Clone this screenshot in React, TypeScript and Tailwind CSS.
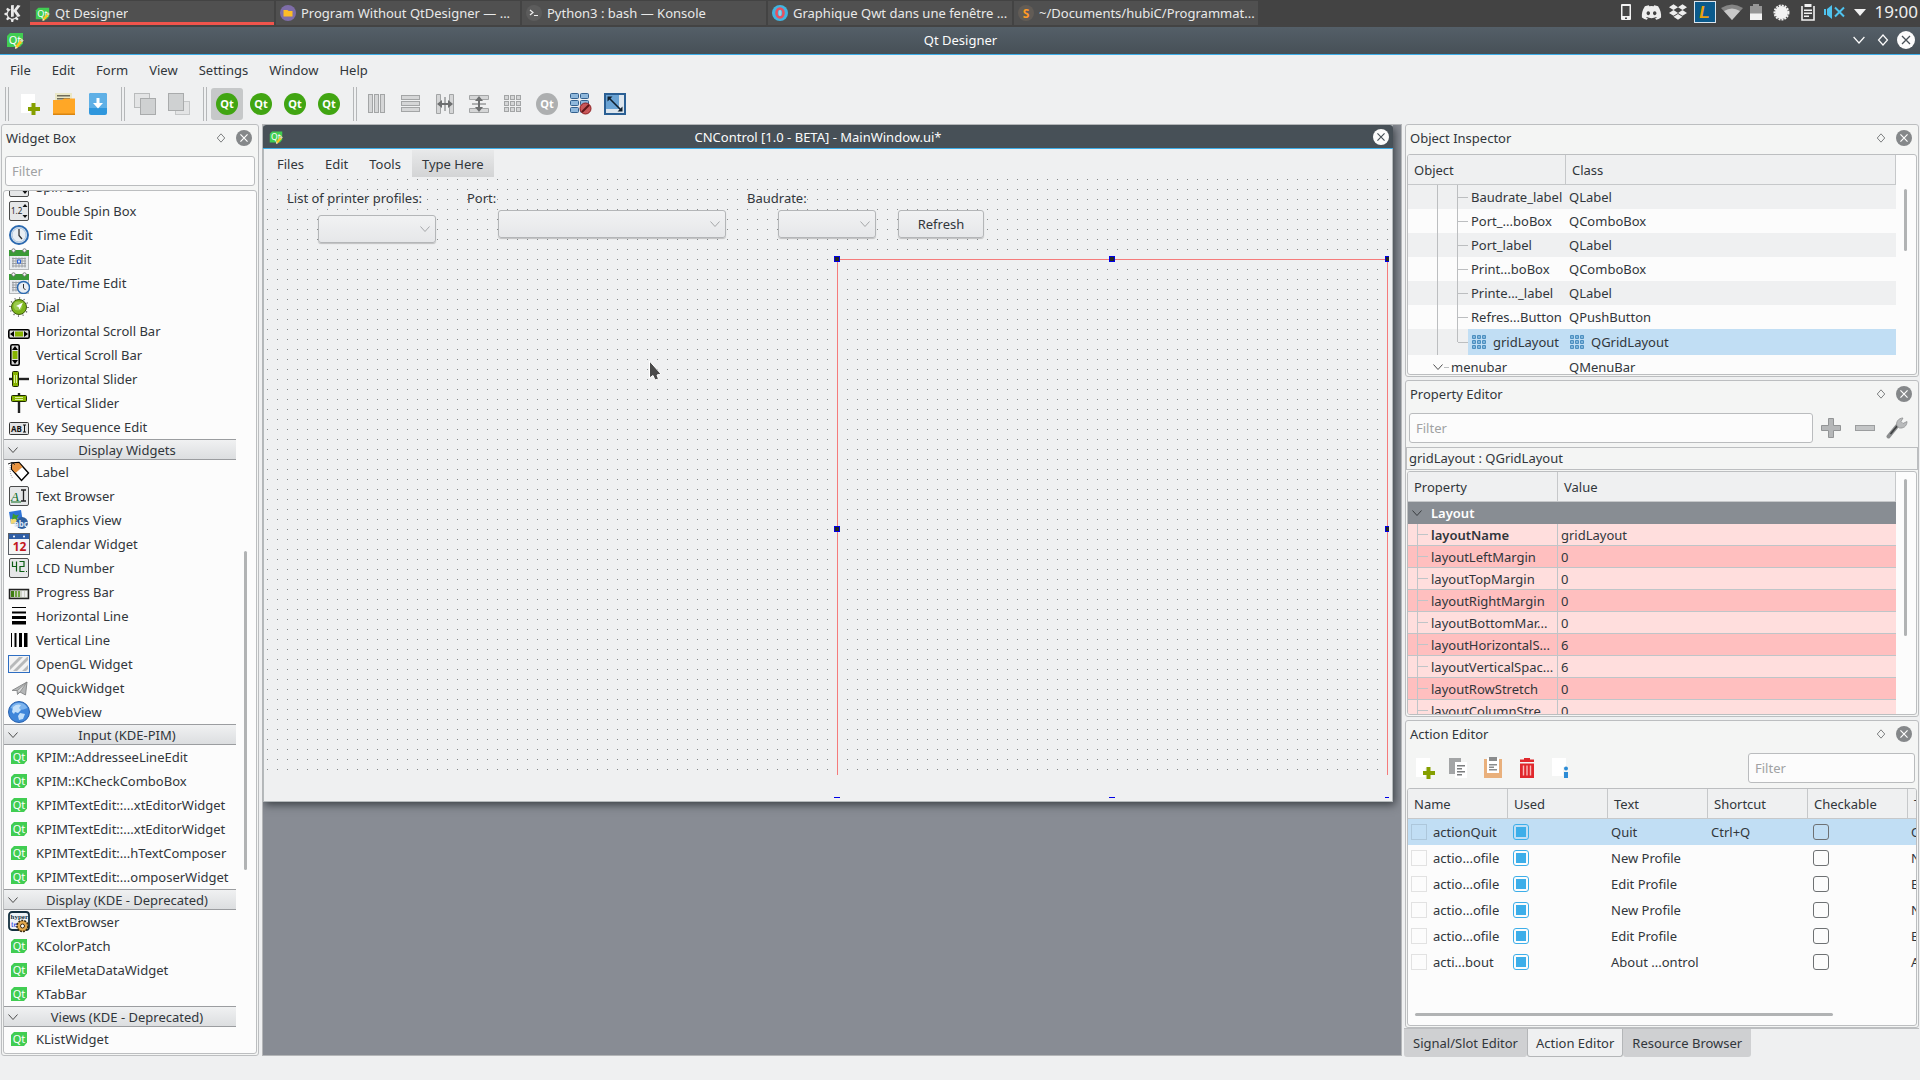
import type { ReactNode } from 'react'
import { SiKde } from 'react-icons/si'
import { FaDiscord, FaDropbox } from 'react-icons/fa'

/* ---------- small shared pieces ---------- */

const QtBadge = ({ size = 18, pencil = false }: { size?: number; pencil?: boolean }) => (
  <svg width={size} height={size} viewBox="0 0 18 18" className="shrink-0">
    <path d="M4 2h13v10.500l-3 3.500H1V5z" fill="#41cd52" />
    <text x="9" y="13" textAnchor="middle" fontSize="11" fontFamily="Noto Sans" fill="#fff">Qt</text>
    {pencil && (
      <>
        <path d="M15.500 7.500l2 2-6 7.500-2.500.8.5-2.800z" fill="#fcc520" />
        <path d="M15.500 7.500l2 2-1.500 1.800-2-1.800z" fill="#c9d8c4" />
        <path d="M9.500 15l2 2-2.500.8z" fill="#e8e8e8" />
      </>
    )}
  </svg>
)

const Chevron = ({ size = 10, color = '#4d4d4d' }: { size?: number; color?: string }) => (
  <svg width={size} height={size} viewBox="0 0 10 10" fill="none" stroke={color} className="shrink-0">
    <path d="M.5 2.500L5 7.500l4.500-5" />
  </svg>
)

const Diamond = ({ size, color }: { size: number; color: string }) => (
  <svg width={size} height={size} viewBox="0 0 12 12" fill="none" stroke={color} strokeWidth="1.200">
    <path d="M6 1l4.500 5L6 11 1.500 6z" />
  </svg>
)

const CloseCircle = ({ size, bg, fg }: { size: number; bg: string; fg: string }) => (
  <svg width={size} height={size} viewBox="0 0 18 18">
    <circle cx="9" cy="9" r="9" fill={bg} />
    <path d="M5 5l8 8M13 5l-8 8" stroke={fg} strokeWidth="1.300" />
  </svg>
)

const DockTitle = ({ title }: { title: string }) => (
  <div className="flex h-[29px] shrink-0 items-center pr-[6px] pb-[3px] pl-1">
    <h2 className="flex-1">{title}</h2>
    <button aria-label={`Float ${title}`} className="mr-[10px]"><Diamond size={10} color="#7f8182" /></button>
    <button aria-label={`Close ${title}`}><CloseCircle size={16} bg="#85888a" fg="#fff" /></button>
  </div>
)

const FilterBox = ({ label, className }: { label: string; className: string }) => (
  <input
    type="text"
    placeholder="Filter"
    aria-label={label}
    className={`h-[30px] rounded-[3px] border border-[#babcbe] bg-[#fcfcfc] px-[6px] placeholder:text-[#a0a2a3] focus:outline-none ${className}`}
  />
)

const Handle = () => (
  <div className="flex h-[34px] w-1 shrink-0 border-x border-[#b5b7b9]" />
)

/* ---------- task bar ---------- */

const TASKS = [
  { title: 'Qt Designer', icon: <QtBadge size={15} pencil />, active: true },
  {
    title: 'Program Without QtDesigner — ...',
    icon: (
      <svg width="16" height="16" viewBox="0 0 16 16">
        <circle cx="8" cy="8" r="8" fill="#7e6da8" />
        <path d="M3.500 5h4l1 1h4v5.500h-9z" fill="#fdbc27" />
      </svg>
    ),
  },
  {
    title: 'Python3 : bash — Konsole',
    icon: (
      <svg width="16" height="16" viewBox="0 0 16 16" fill="none" stroke="#eee" strokeWidth="1.200">
        <circle cx="8" cy="8" r="8" fill="#5c5c5c" stroke="none" />
        <path d="M4 5l3 2.500L4 10M8 10.500h4" />
      </svg>
    ),
  },
  {
    title: 'Graphique Qwt dans une fenêtre ...',
    icon: (
      <svg width="16" height="16" viewBox="0 0 16 16">
        <circle cx="8" cy="8" r="8" fill="#41b4e0" />
        <ellipse cx="8" cy="8" rx="3.500" ry="4.500" fill="none" stroke="#e8505f" strokeWidth="2.600" />
        <ellipse cx="8" cy="8" rx="1.500" ry="3" fill="#8fd0ea" />
      </svg>
    ),
  },
  {
    title: '~/Documents/hubiC/Programmat...',
    icon: (
      <svg width="16" height="16" viewBox="0 0 16 16">
        <circle cx="8" cy="8" r="8" fill="#625c56" />
        <text x="8" y="12.500" textAnchor="middle" fontSize="12" fontWeight="700" fontFamily="Noto Sans" fill="#ff9a26">S</text>
      </svg>
    ),
  },
]

const Tray = () => (
  <div className="flex items-center gap-[9px] pr-[2px] text-[#eee]">
    <svg width="12" height="18" viewBox="0 0 12 18">
      <rect x="1" y="1" width="10" height="16" rx="1" fill="#f2f2f2" />
      <rect x="2.500" y="3" width="7" height="10" fill="#454545" />
      <rect x="5" y="14.500" width="2" height="1.500" fill="#454545" />
    </svg>
    <FaDiscord size={21} className="-mr-[2px]" />
    <FaDropbox size={18} />
    <svg width="22" height="22" viewBox="0 0 22 22" className="-mx-[2px]">
      <rect x=".5" y=".5" width="21" height="21" fill="#0a5a8c" stroke="#d9e5ee" />
      <text x="10.500" y="17" textAnchor="middle" fontSize="17" fontStyle="italic" fontWeight="700" fontFamily="Liberation Sans" fill="#e8a20c">L</text>
    </svg>
    <svg width="22" height="17" viewBox="0 0 22 17" className="-mx-[2px]">
      <path d="M0 4Q11-3 22 4L11 16z" fill="#858585" />
      <path d="M3 7Q11 2 19 7L11 16z" fill="#c9c9c9" />
    </svg>
    <svg width="12" height="16" viewBox="0 0 12 16">
      <path d="M3 0h6v2h3v8H0V2h3z" fill="#959595" />
      <path d="M0 9.500h12V16H0z" fill="#f2f2f2" />
    </svg>
    <svg width="17" height="17" viewBox="0 0 17 17" className="mx-[2px]">
      <circle cx="8.500" cy="8.500" r="6.500" fill="#f2f2f2" />
      <circle cx="8.500" cy="8.500" r="7" fill="none" stroke="#f2f2f2" strokeWidth="2" strokeDasharray="2 1" />
    </svg>
    <svg width="14" height="17" viewBox="0 0 14 17">
      <path d="M1 2v14h12V2" fill="none" stroke="#f2f2f2" strokeWidth="1.600" />
      <path d="M3.500 0h7v3h-7zM3 5.500h8V7H3zM3 8.500h8V10H3zM3 11.500h5V13H3z" fill="#f2f2f2" />
    </svg>
    <svg width="21" height="14" viewBox="0 0 21 14">
      <path d="M0 4h2v6H0zM3 4l5-4v14L3 10z" fill="#4fc3ee" />
      <path d="M11 2.500l9 9M20 2.500l-9 9" stroke="#4fc3ee" strokeWidth="2" />
    </svg>
    <svg width="12" height="7" viewBox="0 0 12 7"><path d="M0 0h12L6 7z" fill="#f2f2f2" /></svg>
    <span className="text-[17px] leading-6">19:00</span>
  </div>
)

const TaskBar = () => (
  <div className="flex h-[27px] shrink-0 items-start bg-[#434343] text-[#e9e9e9]">
    <button aria-label="Application launcher" className="flex h-[26px] w-[30px] items-center pl-1">
      <SiKde size={17} />
    </button>
    <nav className="flex flex-1 gap-[2px] pt-px">
      {TASKS.map(task => (
        <button
          key={task.title}
          className={`flex h-6 w-[244px] items-center gap-[5px] border-b-[3px] bg-[#505050] pl-1 ${
            task.active ? 'border-[#f0544c] pl-[5px]' : 'border-[#505050]'
          }`}
        >
          <span className="pt-[3px]">{task.icon}</span>
          <span className="truncate pt-[2px]">{task.title}</span>
        </button>
      ))}
    </nav>
    <Tray />
  </div>
)

/* ---------- tool bar ---------- */

const NewFileIcon = () => (
  <svg width="22" height="22" viewBox="0 0 22 22">
    <path d="M2 1h14v10h-5v9H2z" fill="#fff" />
    <path d="M12.500 10h4v4h4.500v4h-4.500v4h-4v-4H9v-4h3.500z" fill="#859f00" />
  </svg>
)

const OpenIcon = () => (
  <svg width="22" height="22" viewBox="0 0 22 22">
    <path d="M2 0h17v12H2z" fill="#eae7c6" />
    <path d="M4 2h13v1.500H4zM4 5h13v1.500H4z" fill="#6f6c5c" />
    <path d="M0 7h9l2-1.500h11V21H0z" fill="#ffa726" />
    <path d="M0 20.500h22V22H0z" fill="#d98511" />
  </svg>
)

const SaveIcon = () => (
  <svg width="22" height="22" viewBox="0 0 22 22">
    <rect x="2" y="0" width="18" height="22" rx="2" fill="#2f97dd" />
    <path d="M4 0h14a2 2 0 012 2v13H2V2a2 2 0 012-2z" fill="#5fb0e6" />
    <path d="M9.500 5h3v5H16l-5 5.500L6 10h3.500z" fill="#fff" />
  </svg>
)

const StackIcon = ({ front }: { front: boolean }) => (
  <svg width="22" height="24" viewBox="0 0 22 24" stroke="#a9abac">
    {front ? (
      <>
        <rect x="7.500" y="9.500" width="14" height="13" fill="#e3e4e5" stroke="#c5c7c8" />
        <rect x=".5" y="1.500" width="15" height="17" fill="#cfd1d2" />
      </>
    ) : (
      <>
        <rect x=".5" y="1.500" width="15" height="14" fill="#e3e4e5" stroke="#b9bbbc" />
        <rect x="6.500" y="6.500" width="15" height="16" fill="#cfd1d2" />
      </>
    )}
  </svg>
)

const QtRound = ({ color = '#41a512' }: { color?: string }) => (
  <svg width="22" height="22" viewBox="0 0 22 22">
    <circle cx="11" cy="11" r="11" fill={color} />
    <text x="11" y="15" textAnchor="middle" fontSize="11" fontWeight="700" fontFamily="Noto Sans" fill="#fff">Qt</text>
  </svg>
)

const LayoutIcon = ({ kind }: { kind: string }) => (
  <svg width="20" height="20" viewBox="0 0 20 20" fill="#d5d6d7" stroke="#a3a5a6">
    {kind === 'h' && [1.500, 7.500, 13.500].map(x => <rect key={x} x={x} y=".5" width="4" height="18" />)}
    {kind === 'v' && [1.500, 7.500, 13.500].map(y => <rect key={y} x=".5" y={y} width="18" height="4" />)}
    {kind === 'hs' && (
      <>
        <path d="M1.500 .5h4v19h-4zM14.500 .5h4v19h-4z" />
        <path d="M2 10l5-4v3h6V6l5 4-5 4v-3H7v3z" fill="#6d6f70" stroke="none" />
        <path d="M10 3v14" stroke="#6d6f70" />
      </>
    )}
    {kind === 'vs' && (
      <>
        <path d="M.5 1.500v4h19v-4zM.5 14.500v4h19v-4z" />
        <path d="M10 2l4 5h-3v6h3l-4 5-4-5h3V7H6z" fill="#6d6f70" stroke="none" />
        <path d="M3 10h14" stroke="#6d6f70" />
      </>
    )}
    {kind === 'grid' && [1.500, 7.500, 13.500].map(x => [1.500, 7.500, 13.500].map(y => <rect key={`${x}-${y}`} x={x} y={y} width="4" height="4" />))}
  </svg>
)

const BreakLayoutIcon = () => (
  <svg width="22" height="22" viewBox="0 0 22 22">
    {[0, 7, 14].map(y => (
      <g key={y} fill="#8fb8dc" stroke="#33618f">
        <rect x=".5" y={y + 0.5} width="8" height="5" rx="1" />
        <rect x="10.500" y={y + 0.5} width="8" height="5" rx="1" />
      </g>
    ))}
    <circle cx="15.500" cy="15.500" r="5.500" fill="#c9585a" stroke="#8e1d20" />
    <path d="M12 19l7-7" stroke="#5e1517" strokeWidth="2" />
  </svg>
)

const AdjustSizeIcon = () => (
  <svg width="22" height="22" viewBox="0 0 22 22">
    <rect x="1" y="1" width="20" height="20" fill="#6aa3d4" stroke="#2a5f94" strokeWidth="2" />
    <path d="M15 2h5v18H2v-4h13z" fill="#dde6ee" />
    <path d="M5 5l12 12" stroke="#10202e" strokeWidth="1.600" />
    <path d="M3.500 3.500h5l-5 5zM18.500 18.500h-5l5-5z" fill="#10202e" />
  </svg>
)

const ToolButton = ({ label, active, children }: { label: string; active?: boolean; children: ReactNode }) => (
  <button aria-label={label} className={`flex size-8 items-center justify-center rounded-[3px] ${active ? 'bg-[#c6c8c9]' : ''}`}>
    {children}
  </button>
)

const ToolBar = () => (
  <div className="flex h-[38px] shrink-0 items-center pl-[5px]">
    <Handle />
    <div className="flex gap-[2px] pr-[7px] pl-[5px]">
      <ToolButton label="New"><NewFileIcon /></ToolButton>
      <ToolButton label="Open"><OpenIcon /></ToolButton>
      <ToolButton label="Save"><SaveIcon /></ToolButton>
    </div>
    <Handle />
    <div className="flex gap-[2px] px-1 pr-[8px]">
      <ToolButton label="Send to back"><StackIcon front={false} /></ToolButton>
      <ToolButton label="Bring to front"><StackIcon front /></ToolButton>
    </div>
    <Handle />
    <div className="flex gap-[2px] pr-[8px] pl-1">
      <ToolButton label="Edit widgets" active><QtRound /></ToolButton>
      <ToolButton label="Edit signals/slots"><QtRound /></ToolButton>
      <ToolButton label="Edit buddies"><QtRound /></ToolButton>
      <ToolButton label="Edit tab order"><QtRound /></ToolButton>
    </div>
    <Handle />
    <div className="flex gap-[2px] pl-1">
      <ToolButton label="Lay out horizontally"><LayoutIcon kind="h" /></ToolButton>
      <ToolButton label="Lay out vertically"><LayoutIcon kind="v" /></ToolButton>
      <ToolButton label="Horizontal splitter"><LayoutIcon kind="hs" /></ToolButton>
      <ToolButton label="Vertical splitter"><LayoutIcon kind="vs" /></ToolButton>
      <ToolButton label="Lay out in a grid"><LayoutIcon kind="grid" /></ToolButton>
      <ToolButton label="Lay out in a form"><QtRound color="#adafb0" /></ToolButton>
      <ToolButton label="Break layout"><BreakLayoutIcon /></ToolButton>
      <ToolButton label="Adjust size"><AdjustSizeIcon /></ToolButton>
    </div>
  </div>
)

/* ---------- widget box ---------- */

const calendar = (
  <>
    <rect x="1.500" y="3.500" width="19" height="18" fill="#e9ecef" stroke="#b5b8ba" />
    <path d="M1 2h20v6H1z" fill="#3a9a35" />
    <path d="M4 10.500h14M4 13h14M4 15.500h14M4 18h14M5 9.500v10M8 9.500v10M11 9.500v10M14 9.500v10M17 9.500v10" stroke="#9a9ea3" />
    <circle cx="5.500" cy="2.500" r="1.700" fill="#fff" stroke="#777" />
    <circle cx="16.500" cy="2.500" r="1.700" fill="#fff" stroke="#777" />
  </>
)

const roundedTile = <rect x="1.500" y="1.500" width="19" height="19" rx="1.500" fill="#e6e7e8" stroke="#4b4b4b" />

const ICONS: Record<string, ReactNode> = {
  spin: (
    <>
      {roundedTile}
      <text x="3" y="14" fontSize="8" fontFamily="Noto Sans" fill="#222">1.2</text>
      <path d="M14.500 7h5L17 4zM14.500 15h5L17 18z" fill="#111" />
    </>
  ),
  time: (
    <>
      <circle cx="11" cy="11" r="9" fill="#e9eef3" stroke="#2c6ab0" strokeWidth="2" />
      <circle cx="11" cy="11" r="7" fill="none" stroke="#a9c3df" />
      <path d="M11 5v6.500l3 3.500" fill="none" stroke="#333" strokeWidth="1.300" />
    </>
  ),
  date: (
    <>
      {calendar}
      <rect x="9.500" y="12" width="3" height="3" fill="#dbe8ff" stroke="#2b66e0" />
    </>
  ),
  datetime: (
    <>
      {calendar}
      <circle cx="15.500" cy="15.500" r="6" fill="#e9eef3" stroke="#2c6ab0" strokeWidth="1.500" />
      <path d="M15.500 12v4l2 2" fill="none" stroke="#333" />
    </>
  ),
  dial: (
    <>
      <circle cx="11" cy="11" r="9" fill="none" stroke="#555" strokeWidth="1.500" strokeDasharray="1 3.700" />
      <circle cx="11" cy="11" r="7.500" fill="#7db51c" stroke="#3c5c0c" />
      <circle cx="10" cy="10" r="4.500" fill="#9ccb4f" />
      <path d="M15 6.500l-3.500 7-1-2.500L8 10z" fill="#fff" />
    </>
  ),
  hscroll: (
    <>
      <rect x=".8" y="9.800" width="20.400" height="8.400" rx="1.500" fill="#dcdcdc" stroke="#000" strokeWidth="1.600" />
      <path d="M6 11v6l-4-3zM16 11v6l4-3z" fill="#000" />
      <rect x="7" y="11.500" width="8" height="5" fill="#86b300" />
    </>
  ),
  vscroll: (
    <>
      <rect x="2.800" y=".8" width="8.400" height="20.400" rx="1.500" fill="#dcdcdc" stroke="#000" strokeWidth="1.600" />
      <path d="M4 6h6L7 2zM4 16h6l-3 4z" fill="#000" />
      <rect x="4.500" y="7" width="5" height="8" fill="#86b300" />
    </>
  ),
  hslider: (
    <>
      <path d="M1 11h20" stroke="#222" strokeWidth="2.400" />
      <rect x="4.500" y="3.500" width="6" height="15" rx="1" fill="#86b300" stroke="#1d2a00" />
      <path d="M6.500 7v8M8.500 7v8" stroke="#dcefa0" />
    </>
  ),
  vslider: (
    <>
      <path d="M11 1v20" stroke="#222" strokeWidth="2.400" />
      <rect x="3.500" y="3.500" width="15" height="6" rx="1" fill="#86b300" stroke="#1d2a00" />
      <path d="M7 5.500h8M7 7.500h8" stroke="#dcefa0" />
    </>
  ),
  key: (
    <>
      <rect x="1.500" y="6.500" width="19" height="12" rx="1" fill="#e2e3e4" stroke="#333" />
      <text x="3" y="15.500" fontSize="8" fontWeight="700" fontFamily="Noto Sans" fill="#111">AB</text>
      <path d="M15 9h3M15 16h3M16.500 9v7" stroke="#111" />
    </>
  ),
  label: (
    <>
      <path d="M4 2l7-.5L20.500 12l-7 7.500L3.500 8z" fill="#fff" stroke="#000" strokeWidth="1.400" />
      <path d="M4.500 2.500l6.500-.5 3.500 4-7 6L4 8z" fill="#e8933f" />
      <path d="M0 3l4-1.500 3 2" fill="none" stroke="#222" />
      <path d="M2.500 4c-1 5 0 10 2 13" fill="none" stroke="#999" strokeDasharray="1 1" />
    </>
  ),
  text: (
    <>
      {roundedTile}
      <text x="3" y="15.500" fontSize="13" fontStyle="italic" fontFamily="Liberation Serif" fill="#0a6a1c">A</text>
      <path d="M3 17h10" stroke="#0a6a1c" />
      <path d="M13 5h5M13 16h5M15.500 5v11" stroke="#222" strokeWidth="1.300" />
    </>
  ),
  graphics: (
    <>
      <path d="M1 3l12-2 2 12-12 2z" fill="#2e74d8" />
      <path d="M2.500 10l12-1 .5 4-12 2z" fill="#f2d873" />
      <path d="M5 4.500l3 2 3-1-2 3 1 4-3-3-3 1z" fill="#3c9c2e" />
      <circle cx="14" cy="14" r="6" fill="#2f5f9f" />
      <text x="6" y="17.500" fontSize="8" fontWeight="700" fontFamily="Noto Sans" fill="#dce8f7">abc</text>
    </>
  ),
  cal: (
    <>
      <rect x=".5" y=".5" width="21" height="21" fill="#f4f4f4" stroke="#5a5f66" />
      <path d="M1 1h20v5H1z" fill="#2f5ea5" />
      <circle cx="6" cy="3.500" r="1" fill="#fff" />
      <circle cx="16" cy="3.500" r="1" fill="#fff" />
      <text x="11.500" y="18" textAnchor="middle" fontSize="12" fontWeight="700" fontFamily="Noto Sans" fill="#c3161c">12</text>
    </>
  ),
  lcd: (
    <>
      {roundedTile}
      <path d="M4.500 4.500v5h4v-5M8.500 9.500v5M11.500 4.500h4.500v5h-4v5h4.500M18 14.500h1" fill="none" stroke="#0b5c12" strokeWidth="1.200" />
    </>
  ),
  progress: (
    <>
      <rect x="1.500" y="8.500" width="19" height="9" fill="#cfd3c8" stroke="#222" strokeWidth="1.500" />
      <path d="M3 10h3v6H3z" fill="#3f7d12" />
      <path d="M7 10h2v6H7zM10 10h2v6h-2z" fill="#6ea33f" />
      <path d="M14 10h2v6h-2zM17 10h2v6h-2z" fill="#efefef" />
    </>
  ),
  hline: <path d="M4 2h14v1H4zM4 6.500h14v2H4zM4 11h14v3H4zM4 16h14v3.500H4z" fill="#000" />,
  vline: <path d="M3 4h1v14H3zM6.500 4h2v14h-2zM11 4h3v14h-3zM16 4h3.500v14H16z" fill="#000" />,
  opengl: (
    <>
      <rect x=".5" y="2.500" width="21" height="17" fill="#f3f3f3" stroke="#2e6ec2" />
      <path d="M2 13l9-9h4L2 17zM5 18L19 4h1v3L9 18zM14 18l6-6v4l-2 2z" fill="#b7b9ba" />
    </>
  ),
  quick: (
    <>
      <path d="M4 13.500L19 5l-1.500 13-5.500-3-2.500 2.500-.5-4z" fill="#b4b6b7" stroke="#8b8d8e" />
      <path d="M9 14L19 5l-7 10" fill="#dcdddd" stroke="#777" strokeWidth=".6" />
    </>
  ),
  web: (
    <>
      <circle cx="11" cy="11" r="10.500" fill="#3f86da" stroke="#2b62ad" />
      <path d="M2.500 7a9.500 9.500 0 0117 0Q11 11 2.500 7z" fill="#7db4ee" />
      <path d="M5 6c3-3 6-3 8-2l-2 3 2 2-3 3-3-1-1 2-2-2zM12 12l5 1-2 5-4 1-1-4z" fill="#c3e0fa" />
    </>
  ),
  hyper: (
    <>
      <rect x="1" y="1" width="20" height="18" rx="3" fill="#eef3f6" stroke="#14303f" strokeWidth="1.800" />
      <text x="2.500" y="8" fontSize="7" fontWeight="700" fontFamily="Liberation Serif" fill="#16323f">hyper</text>
      <text x="3" y="16" fontSize="9" fontFamily="Liberation Serif" fill="#1733d8">te</text>
      <circle cx="14.500" cy="15" r="5.500" fill="#e3a94c" stroke="#3a2a10" strokeWidth="1.600" strokeDasharray="2 1" />
      <circle cx="14.500" cy="15" r="2" fill="#fff" stroke="#3a2a10" />
    </>
  ),
  dark: <path d="M3 2h16v16H3z" fill="#3a150d" />,
}

interface Category {
  title?: string
  items: [string, string][]
}

const WIDGETS: Category[] = [
  {
    items: [
      ['spin', 'Spin Box'],
      ['spin', 'Double Spin Box'],
      ['time', 'Time Edit'],
      ['date', 'Date Edit'],
      ['datetime', 'Date/Time Edit'],
      ['dial', 'Dial'],
      ['hscroll', 'Horizontal Scroll Bar'],
      ['vscroll', 'Vertical Scroll Bar'],
      ['hslider', 'Horizontal Slider'],
      ['vslider', 'Vertical Slider'],
      ['key', 'Key Sequence Edit'],
    ],
  },
  {
    title: 'Display Widgets',
    items: [
      ['label', 'Label'],
      ['text', 'Text Browser'],
      ['graphics', 'Graphics View'],
      ['cal', 'Calendar Widget'],
      ['lcd', 'LCD Number'],
      ['progress', 'Progress Bar'],
      ['hline', 'Horizontal Line'],
      ['vline', 'Vertical Line'],
      ['opengl', 'OpenGL Widget'],
      ['quick', 'QQuickWidget'],
      ['web', 'QWebView'],
    ],
  },
  {
    title: 'Input (KDE-PIM)',
    items: [
      ['qt', 'KPIM::AddresseeLineEdit'],
      ['qt', 'KPIM::KCheckComboBox'],
      ['qt', 'KPIMTextEdit::...xtEditorWidget'],
      ['qt', 'KPIMTextEdit::...xtEditorWidget'],
      ['qt', 'KPIMTextEdit:...hTextComposer'],
      ['qt', 'KPIMTextEdit:...omposerWidget'],
    ],
  },
  {
    title: 'Display (KDE - Deprecated)',
    items: [
      ['hyper', 'KTextBrowser'],
      ['qt', 'KColorPatch'],
      ['qt', 'KFileMetaDataWidget'],
      ['qt', 'KTabBar'],
    ],
  },
  {
    title: 'Views (KDE - Deprecated)',
    items: [
      ['qt', 'KListWidget'],
      ['dark', ''],
    ],
  },
]

const WidgetBox = () => (
  <aside className="mr-[3px] flex w-[258px] shrink-0 flex-col rounded-[3px] border border-[#bcbec0] bg-[#f4f5f4]">
    <DockTitle title="Widget Box" />
    <FilterBox label="Filter widgets" className="mx-[3px] mt-[2px]" />
    <div className="mx-px mt-1 mb-px flex min-h-0 flex-1 overflow-hidden rounded-[3px] border border-[#bcbec0] bg-[#fcfcfc]">
      <div className="h-0 w-[232px] shrink-0">
        <div className="-mt-4">
          {WIDGETS.map((cat, i) => (
            <section key={i}>
              {cat.title && (
                <button className="flex h-[21px] w-full items-center border-y border-[#9b9da0] bg-linear-to-b from-[#f0f1f2] to-[#dcdee0] pl-1">
                  <Chevron />
                  <span className="flex-1 text-center">{cat.title}</span>
                </button>
              )}
              <ul>
                {cat.items.map(([icon, name], j) => (
                  <li key={j} className="flex h-6 items-center gap-[6px] pl-1">
                    {icon === 'qt' ? (
                      <span className="flex w-[22px] justify-center"><QtBadge size={18} /></span>
                    ) : (
                      <svg width="22" height="22" viewBox="0 0 22 22" className="shrink-0">{ICONS[icon]}</svg>
                    )}
                    <span className="whitespace-nowrap">{name}</span>
                  </li>
                ))}
              </ul>
            </section>
          ))}
        </div>
      </div>
      <div className="flex flex-1 justify-center pt-[360px] pr-[2px]">
        <div className="h-[319px] w-[3px] rounded bg-[#b1b3b4]" />
      </div>
    </div>
  </aside>
)

/* ---------- form being edited ---------- */

const FormCombo = ({ id, box }: { id: string; box: string }) => (
  <div className={`absolute h-7 ${box}`}>
    <select
      id={id}
      className="size-full appearance-none rounded-[3px] border border-[#b4b6b8] bg-linear-to-b from-[#f1f2f3] to-[#e6e7e9] shadow-[0_1px_1px_rgba(0,0,0,0.2)]"
    />
    <span className="pointer-events-none absolute inset-y-0 right-[6px] flex items-center">
      <Chevron color="#a5a7a9" />
    </span>
  </div>
)

const Grip = ({ at }: { at: string }) => (
  <span className={`absolute size-[6px] border border-[#0000e6] bg-[#232627] ${at}`} />
)

const FormWindow = () => (
  <section className="absolute top-0 right-2 left-0 flex h-[677px] flex-col border-x border-b border-[#b4b9bb] bg-[#eff0f1] shadow-[2px_3px_8px_rgba(30,35,40,0.7)]">
    <header className="-mx-px flex h-6 shrink-0 items-center rounded-t-[3px] border-b border-[#3daee9] bg-[#475057] pr-1 pl-[6px] text-[#fcfcfc]">
      <QtBadge size={14} pencil />
      <h1 className="flex-1 pr-5 text-center">CNControl [1.0 - BETA] - MainWindow.ui*</h1>
      <button aria-label="Close form"><CloseCircle size={16} bg="#fcfcfc" fg="#475057" /></button>
    </header>
    <nav className="flex h-[29px] shrink-0 items-center gap-px pl-[3px]">
      <button className="h-[27px] px-[10px]">Files</button>
      <button className="h-[27px] px-[10px]">Edit</button>
      <button className="h-[27px] px-[10px]">Tools</button>
      <button className="h-[27px] bg-linear-to-b from-[#e8e9ea] to-[#d3d4d5] px-[10px]">Type Here</button>
    </nav>
    <div className="relative flex-1">
      <svg className="absolute inset-x-0 top-0 h-[597px] w-full">
        <defs>
          <pattern id="dots" width="10" height="10" patternUnits="userSpaceOnUse">
            <rect x="3" y="1" width="1" height="1" fill="#85888a" />
          </pattern>
        </defs>
        <rect width="100%" height="100%" fill="url(#dots)" />
      </svg>
      <label htmlFor="profiles" className="absolute top-[10px] left-[23px]">List of printer profiles:</label>
      <label htmlFor="port" className="absolute top-[10px] left-[203px]">Port:</label>
      <label htmlFor="baudrate" className="absolute top-[10px] left-[483px]">Baudrate:</label>
      <FormCombo id="profiles" box="top-[37px] left-[54px] w-[118px]" />
      <FormCombo id="port" box="top-8 left-[234px] w-[228px]" />
      <FormCombo id="baudrate" box="top-8 left-[514px] w-[98px]" />
      <button className="absolute top-8 left-[634px] h-7 w-[86px] rounded-[3px] border border-[#b4b6b8] bg-linear-to-b from-[#f1f2f3] to-[#e6e7e9] shadow-[0_1px_1px_rgba(0,0,0,0.2)]">
        Refresh
      </button>

      {/* selected grid layout */}
      <div className="absolute top-[81px] right-1 left-[573px] h-[516px] border-x border-t border-[#f57b7b]" />
      <div className="absolute top-[78px] right-[3px] left-[570px] h-[542px] overflow-hidden">
        <Grip at="top-0 left-0" />
        <Grip at="top-0 left-[275px]" />
        <Grip at="top-0 -right-[2px]" />
        <Grip at="top-[270px] left-0" />
        <Grip at="top-[270px] -right-[2px]" />
        <span className="absolute bottom-0 left-0 h-px w-[6px] bg-[#0000e6]" />
        <span className="absolute bottom-0 left-[275px] h-px w-[6px] bg-[#0000e6]" />
        <span className="absolute right-0 bottom-0 h-px w-1 bg-[#0000e6]" />
      </div>

      <svg width="14" height="24" viewBox="0 0 14 24" className="absolute top-[181px] left-[384px]">
        <path d="M1.500 2v17l3.500-2.500 2 4.500 3.500-1-1.500-4 4-1z" fill="#4a4a4a" stroke="#fff" strokeWidth="1" />
      </svg>
    </div>
  </section>
)

/* ---------- object inspector ---------- */

const OBJECTS = [
  ['Baudrate_label', 'QLabel'],
  ['Port_...boBox', 'QComboBox'],
  ['Port_label', 'QLabel'],
  ['Print...boBox', 'QComboBox'],
  ['Printe..._label', 'QLabel'],
  ['Refres...Button', 'QPushButton'],
]

const GridGlyph = () => (
  <svg width="15" height="15" viewBox="0 0 15 15" className="shrink-0">
    {[0, 5, 10].map(x => [0, 5, 10].map(y => (
      <g key={`${x}-${y}`}>
        <rect x={x} y={y} width="4" height="4" rx="1" fill="#4c8fc0" />
        <rect x={x + 1} y={y + 1} width="2" height="2" fill="#7fb4da" />
      </g>
    )))}
  </svg>
)

const HEAD = 'h-[30px] border-r border-b border-[#c6c8ca] bg-[#eff0f1] px-[6px] text-left font-normal'

const ObjectInspector = () => (
  <section className="flex h-[253px] shrink-0 flex-col rounded-[3px] border border-[#bcbec0] bg-[#f4f5f4]">
    <DockTitle title="Object Inspector" />
    <div className="mx-px mb-px flex min-h-0 flex-1 overflow-hidden rounded-[3px] border border-[#bcbec0] bg-[#fcfcfc]">
      <div className="h-0 flex-1">
        <table className="w-full table-fixed border-separate border-spacing-0">
          <thead>
            <tr>
              <th className={`${HEAD} w-[158px]`}>Object</th>
              <th className={HEAD}>Class</th>
            </tr>
          </thead>
          <tbody>
            {OBJECTS.map(([name, cls]) => (
              <tr key={name} className="odd:bg-[#eff0f1]">
                <td className="p-0">
                  <div className="flex h-6 items-center">
                    <span className="h-full w-[30px] shrink-0 border-r border-[#bcbec0]" />
                    <span className="h-full w-5 shrink-0 border-r border-[#bcbec0]" />
                    <span className="h-px w-[10px] shrink-0 bg-[#bcbec0]" />
                    <span className="pl-[3px] whitespace-nowrap">{name}</span>
                  </div>
                </td>
                <td className="p-0 pl-[3px]">{cls}</td>
              </tr>
            ))}
            <tr className="bg-[#eff0f1]">
              <td className="p-0">
                <div className="flex h-[26px] items-center">
                  <span className="h-full w-[30px] shrink-0 border-r border-[#bcbec0]" />
                  <span className="h-[13px] w-5 shrink-0 self-start border-r border-[#bcbec0]" />
                  <span className="h-px w-[10px] shrink-0 bg-[#bcbec0]" />
                  <span className="flex h-full flex-1 items-center gap-[6px] bg-[#c1def4] pl-1">
                    <GridGlyph />
                    gridLayout
                  </span>
                </div>
              </td>
              <td className="bg-[#c1def4] p-0 pl-1">
                <span className="flex items-center gap-[6px]">
                  <GridGlyph />
                  QGridLayout
                </span>
              </td>
            </tr>
            <tr>
              <td className="p-0">
                <div className="flex h-6 items-center gap-px pl-[25px]">
                  <Chevron />
                  <span className="h-px w-[5px] bg-[#bcbec0]" />
                  <span className="pl-px">menubar</span>
                </div>
              </td>
              <td className="p-0 pl-[3px]">QMenuBar</td>
            </tr>
          </tbody>
        </table>
      </div>
      <div className="flex w-5 justify-center pt-[34px] pr-[2px]">
        <div className="h-[62px] w-[3px] rounded bg-[#b1b3b4]" />
      </div>
    </div>
  </section>
)

/* ---------- property editor ---------- */

const PROPERTIES = [
  ['layoutName', 'gridLayout'],
  ['layoutLeftMargin', '0'],
  ['layoutTopMargin', '0'],
  ['layoutRightMargin', '0'],
  ['layoutBottomMar...', '0'],
  ['layoutHorizontalS...', '6'],
  ['layoutVerticalSpac...', '6'],
  ['layoutRowStretch', '0'],
  ['layoutColumnStre...', '0'],
]

const PropertyEditor = () => (
  <section className="mt-[3px] flex h-[337px] shrink-0 flex-col rounded-[3px] border border-[#bcbec0] bg-[#f4f5f4]">
    <DockTitle title="Property Editor" />
    <div className="mt-[3px] flex items-center pl-[3px]">
      <FilterBox label="Filter properties" className="min-w-0 flex-1" />
      <button aria-label="Add property" className="flex w-[34px] justify-center pl-[2px]">
        <svg width="20" height="20" viewBox="0 0 20 20">
          <path d="M7.500.5h5v7h7v5h-7v7h-5v-7h-7v-5h7z" fill="#b5b7b8" stroke="#939596" />
        </svg>
      </button>
      <button aria-label="Remove property" className="flex w-[34px] justify-center pl-[2px]">
        <svg width="20" height="6" viewBox="0 0 20 6">
          <rect x=".5" y=".5" width="19" height="5" fill="#c3c5c6" stroke="#9c9e9f" />
        </svg>
      </button>
      <button aria-label="Configure" className="mr-[5px] flex w-[32px] justify-center">
        <svg width="22" height="22" viewBox="0 0 22 22">
          <path d="M2.500 19.500l9-11" stroke="#8b8d8e" strokeWidth="4" strokeLinecap="round" />
          <path d="M4.500 17l7-8.500" stroke="#3d3f40" strokeWidth="1.600" />
          <path d="M11 9c-1.500-4 1.500-8 6-8l-2 3.500 2 2 4-2c0 5-4 7-7.500 6.500z" fill="#b9bbbc" stroke="#8f9192" strokeWidth=".8" />
        </svg>
      </button>
    </div>
    <p className="mt-1 h-[23px] shrink-0 border border-[#bcbec0] pl-[2px]">gridLayout : QGridLayout</p>
    <div className="mx-px mt-px mb-px flex min-h-0 flex-1 overflow-hidden rounded-[3px] border border-[#bcbec0] bg-[#fcfcfc]">
      <div className="h-0 flex-1">
        <table className="w-full table-fixed border-separate border-spacing-0">
          <thead>
            <tr>
              <th className={`${HEAD} w-[150px]`}>Property</th>
              <th className={HEAD}>Value</th>
            </tr>
          </thead>
          <tbody>
            <tr>
              <td colSpan={2} className="h-[22px] bg-[#888d93] p-0 font-semibold text-white">
                <div className="flex h-[21px] items-center gap-[9px] pl-1">
                  <Chevron color="#3a3d40" />
                  Layout
                </div>
              </td>
            </tr>
            {PROPERTIES.map(([name, value]) => (
              <tr key={name} className="odd:bg-[#ffbfbf] even:bg-[#ffdedd]">
                <td className="border-r border-b border-[#bfc5c8] p-0">
                  <div className="flex h-[21px] items-center">
                    <span className="h-full w-[10px] shrink-0 border-r border-[#bfc5c8]" />
                    <span className="h-px w-[10px] shrink-0 bg-[#bfc5c8]" />
                    <span className={`pl-[3px] whitespace-nowrap ${name === 'layoutName' ? 'font-semibold' : ''}`}>{name}</span>
                  </div>
                </td>
                <td className="border-b border-[#bfc5c8] p-0 pl-[3px]">{value}</td>
              </tr>
            ))}
          </tbody>
        </table>
      </div>
      <div className="flex w-5 justify-center pt-[7px] pr-[2px]">
        <div className="h-[157px] w-[3px] rounded bg-[#b1b3b4]" />
      </div>
    </div>
  </section>
)

/* ---------- action editor ---------- */

const ACTIONS = [
  { name: 'actionQuit', text: 'Quit', shortcut: 'Ctrl+Q' },
  { name: 'actio...ofile', text: 'New Profile', shortcut: '' },
  { name: 'actio...ofile', text: 'Edit Profile', shortcut: '' },
  { name: 'actio...ofile', text: 'New Profile', shortcut: '' },
  { name: 'actio...ofile', text: 'Edit Profile', shortcut: '' },
  { name: 'acti...bout', text: 'About ...ontrol', shortcut: '' },
]

const CHECKBOX = 'block size-4 appearance-none rounded-[3px] border'

const ActionEditor = () => (
  <section className="mt-[3px] flex min-h-0 flex-1 flex-col rounded-[3px] border border-[#bcbec0] bg-[#f4f5f4]">
    <DockTitle title="Action Editor" />
    <div className="mt-[3px] flex items-center gap-3 pr-[3px] pl-2">
      <button aria-label="New action"><NewFileIcon /></button>
      <button aria-label="Copy">
        <svg width="22" height="22" viewBox="0 0 22 22">
          <path d="M1 1h12v16H1z" fill="#a3a5a6" />
          <path d="M7 5h12v16H7z" fill="#fff" />
          <path d="M9 8h8v1.500H9zM9 11h5v1.500H9zM9 14h8v1.500H9zM9 17h5v1.500H9z" fill="#7b7d7e" />
        </svg>
      </button>
      <button aria-label="Paste">
        <svg width="22" height="22" viewBox="0 0 22 22">
          <path d="M2 2h18v19H2z" fill="#e9b07c" />
          <path d="M5 1h12v15H5z" fill="#fff" />
          <path d="M7 0h8v4H7zM7 7h8v1.500H7zM7 9.500h5V11H7zM7 12h8v1.500H7z" fill="#8a8c8d" />
        </svg>
      </button>
      <button aria-label="Delete">
        <svg width="22" height="22" viewBox="0 0 22 22">
          <path d="M8 1h6v1.500h4V5H4V2.500h4zM4 6.500h14V21H4z" fill="#e0282c" />
          <path d="M7.500 8.500v10M11 8.500v10M14.500 8.500v10" stroke="#f9b9b9" strokeWidth="1.400" />
        </svg>
      </button>
      <button aria-label="Action info">
        <svg width="22" height="22" viewBox="0 0 22 22">
          <path d="M2 1h14v9h-3v9H2z" fill="#fff" />
          <circle cx="16" cy="11.500" r="2" fill="#2d8cd6" />
          <path d="M14 15h4v6h-4z" fill="#2d8cd6" />
        </svg>
      </button>
      <FilterBox label="Filter actions" className="ml-auto w-[167px]" />
    </div>
    <div className="mx-px mt-[5px] mb-px flex min-h-0 flex-1 flex-col overflow-hidden rounded-[3px] border border-[#bcbec0] bg-[#fcfcfc]">
      <div className="min-h-0 flex-1 overflow-hidden">
        <table className="w-[600px] table-fixed border-separate border-spacing-0">
          <thead>
            <tr>
              {['Name', 'Used', 'Text', 'Shortcut', 'Checkable', 'ToolTip'].map(h => (
                <th key={h} className={HEAD}>{h}</th>
              ))}
            </tr>
          </thead>
          <tbody>
            {ACTIONS.map((action, i) => (
              <tr key={i} className={i === 0 ? 'bg-[#c1def4]' : ''}>
                <td className="h-[26px] p-0">
                  <div className="flex items-center gap-[6px] pl-[3px]">
                    <span className="size-4 shrink-0 border border-black/10" />
                    {action.name}
                  </div>
                </td>
                <td className="p-0 pl-[5px]">
                  <input
                    type="checkbox"
                    defaultChecked
                    aria-label={`${action.text} used`}
                    className={`${CHECKBOX} border-[#3daee9] bg-clip-content p-[2px] checked:bg-[#3daee9]`}
                  />
                </td>
                <td className="p-0 pl-[3px]">{action.text}</td>
                <td className="p-0 pl-[3px]">{action.shortcut}</td>
                <td className="p-0 pl-[5px]">
                  <input type="checkbox" aria-label={`${action.text} checkable`} className={`${CHECKBOX} border-[#6e7173]`} />
                </td>
                <td className="p-0 pl-[3px]">{action.text}</td>
              </tr>
            ))}
          </tbody>
        </table>
      </div>
      <div className="mb-[9px] ml-[7px] h-[3px] w-[418px] rounded bg-[#b1b3b4]" />
    </div>
  </section>
)

const DockTabs = () => (
  <div className="-ml-px flex h-7 shrink-0 items-start border-t border-[#bcbec0]" role="tablist">
    <button role="tab" className="h-7 rounded-b-[3px] bg-[#cfd0d2] px-[9px]">Signal/Slot Editor</button>
    <button role="tab" aria-selected className="h-7 rounded-b-[3px] border-x border-b border-[#b4b6b8] bg-[#eff0f1] px-2">Action Editor</button>
    <button role="tab" className="h-7 rounded-b-[3px] bg-[#cfd0d2] px-[9px]">Resource Browser</button>
  </div>
)

/* ---------- page ---------- */

export default function App() {
  return (
    <div className="flex h-screen flex-col overflow-hidden bg-[#eff0f1] font-['Noto_Sans',sans-serif] text-[13px] leading-5 text-[#31363b]">
      <TaskBar />
      <header className="flex h-7 shrink-0 items-center border-b border-[#3daee9] bg-linear-to-b from-[#545f68] to-[#475057] pr-[5px] pb-px pl-[6px] text-[#fcfcfc]">
        <QtBadge size={18} pencil />
        <h1 className="flex-1 pl-11 text-center">Qt Designer</h1>
        <div className="flex items-center gap-3">
          <button aria-label="Minimize"><Chevron size={12} color="#fcfcfc" /></button>
          <button aria-label="Maximize"><Diamond size={12} color="#fcfcfc" /></button>
          <button aria-label="Close" className="-ml-1"><CloseCircle size={18} bg="#fcfcfc" fg="#475057" /></button>
        </div>
      </header>
      <nav className="flex h-[30px] shrink-0 items-center gap-px">
        {['File', 'Edit', 'Form', 'View', 'Settings', 'Window', 'Help'].map(item => (
          <button key={item} className="px-[10px]">{item}</button>
        ))}
      </nav>
      <ToolBar />
      <main className="mb-6 flex min-h-0 flex-1 px-px pt-px">
        <WidgetBox />
        <div className="relative min-w-0 flex-1 overflow-hidden border border-[#b4b6b8] bg-[#888c94]">
          <FormWindow />
        </div>
        <aside className="ml-[3px] flex w-[514px] shrink-0 flex-col">
          <ObjectInspector />
          <PropertyEditor />
          <ActionEditor />
          <DockTabs />
        </aside>
      </main>
    </div>
  )
}
